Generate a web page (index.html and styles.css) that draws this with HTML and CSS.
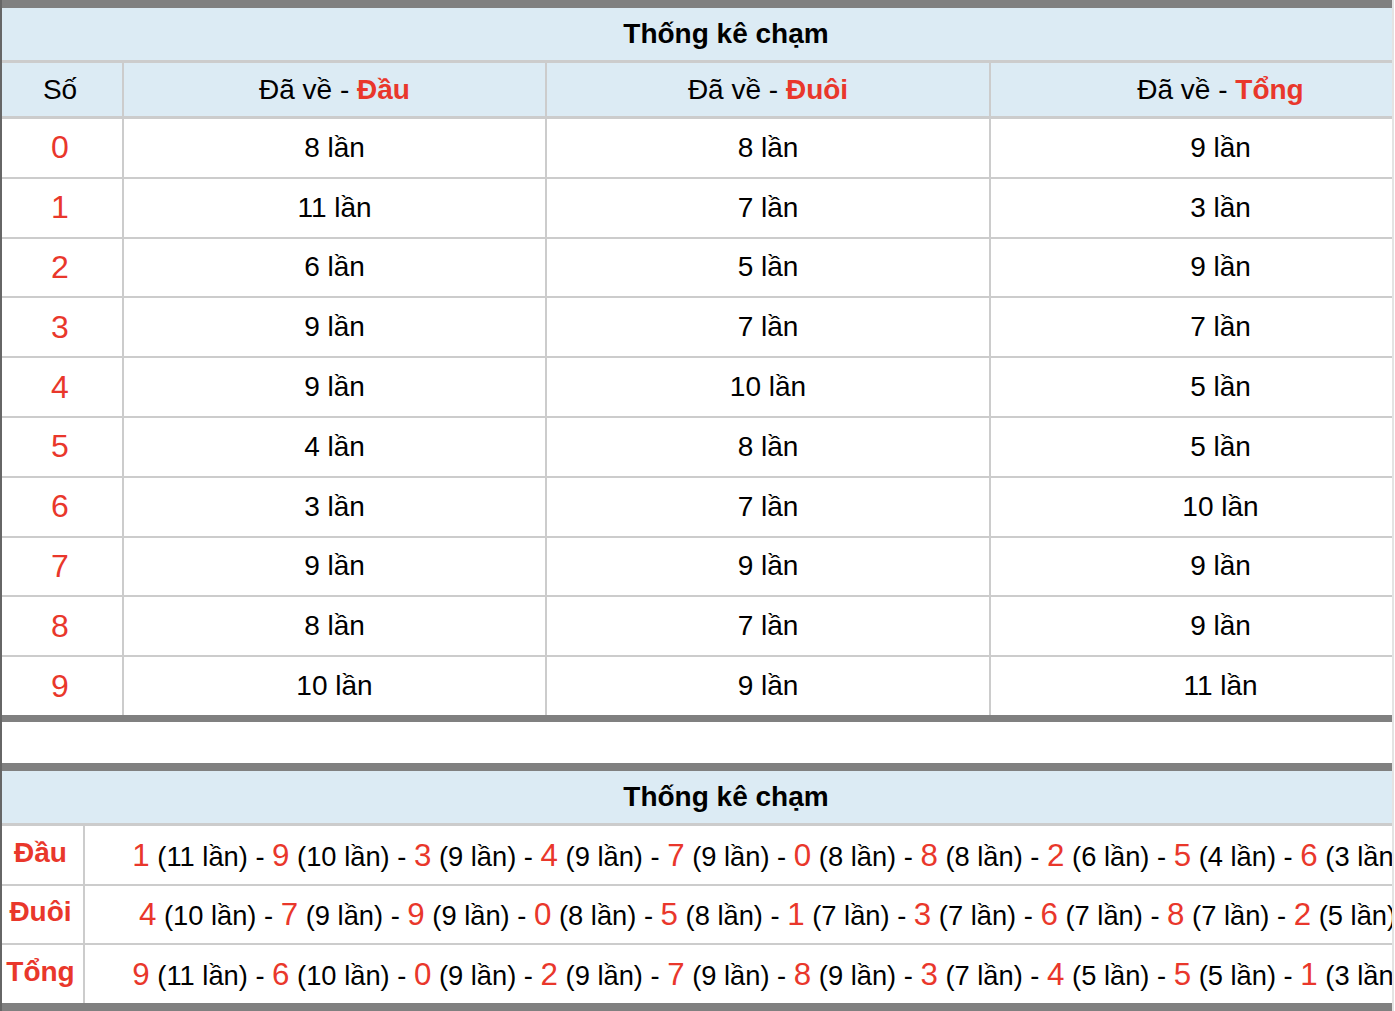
FILE: index.html
```html
<!DOCTYPE html>
<html lang="vi">
<head>
<meta charset="utf-8">
<title>Thống kê chạm</title>
<link rel="stylesheet" href="styles.css">
</head>
<body>
<div class="page">
  <section class="stat">
    <div class="title">Thống kê chạm</div>
    <div class="grid head">
      <div class="cell first"><span>Số</span></div>
      <div class="cell"><span>Đã về - <b class="red">Đầu</b></span></div>
      <div class="cell"><span>Đã về - <b class="red">Đuôi</b></span></div>
      <div class="cell"><span>Đã về - <b class="red">Tổng</b></span></div>
    </div>
    <div class="grid body">
      <div class="cell first n">0</div><div class="cell">8 lần</div><div class="cell">8 lần</div><div class="cell">9 lần</div>
      <div class="cell first n">1</div><div class="cell">11 lần</div><div class="cell">7 lần</div><div class="cell">3 lần</div>
      <div class="cell first n">2</div><div class="cell">6 lần</div><div class="cell">5 lần</div><div class="cell">9 lần</div>
      <div class="cell first n">3</div><div class="cell">9 lần</div><div class="cell">7 lần</div><div class="cell">7 lần</div>
      <div class="cell first n">4</div><div class="cell">9 lần</div><div class="cell">10 lần</div><div class="cell">5 lần</div>
      <div class="cell first n">5</div><div class="cell">4 lần</div><div class="cell">8 lần</div><div class="cell">5 lần</div>
      <div class="cell first n">6</div><div class="cell">3 lần</div><div class="cell">7 lần</div><div class="cell">10 lần</div>
      <div class="cell first n">7</div><div class="cell">9 lần</div><div class="cell">9 lần</div><div class="cell">9 lần</div>
      <div class="cell first n">8</div><div class="cell">8 lần</div><div class="cell">7 lần</div><div class="cell">9 lần</div>
      <div class="cell first n">9</div><div class="cell">10 lần</div><div class="cell">9 lần</div><div class="cell">11 lần</div>
    </div>
  </section>

  <div class="spacer"></div>

  <section class="stat stat-sum">
    <div class="title">Thống kê chạm</div>
    <div class="grid sum">
      <div class="cell first label">Đầu</div>
      <div class="cell line"><span><span class="d">1</span> (11 lần) - <span class="d">9</span> (10 lần) - <span class="d">3</span> (9 lần) - <span class="d">4</span> (9 lần) - <span class="d">7</span> (9 lần) - <span class="d">0</span> (8 lần) - <span class="d">8</span> (8 lần) - <span class="d">2</span> (6 lần) - <span class="d">5</span> (4 lần) - <span class="d">6</span> (3 lần)</span></div>
      <div class="cell first label">Đuôi</div>
      <div class="cell line"><span><span class="d">4</span> (10 lần) - <span class="d">7</span> (9 lần) - <span class="d">9</span> (9 lần) - <span class="d">0</span> (8 lần) - <span class="d">5</span> (8 lần) - <span class="d">1</span> (7 lần) - <span class="d">3</span> (7 lần) - <span class="d">6</span> (7 lần) - <span class="d">8</span> (7 lần) - <span class="d">2</span> (5 lần)</span></div>
      <div class="cell first label">Tổng</div>
      <div class="cell line"><span><span class="d">9</span> (11 lần) - <span class="d">6</span> (10 lần) - <span class="d">0</span> (9 lần) - <span class="d">2</span> (9 lần) - <span class="d">7</span> (9 lần) - <span class="d">8</span> (9 lần) - <span class="d">3</span> (7 lần) - <span class="d">4</span> (5 lần) - <span class="d">5</span> (5 lần) - <span class="d">1</span> (3 lần)</span></div>
    </div>
  </section>
</div>
</body>
</html>
```

FILE: styles.css
```css
* {
  box-sizing: border-box;
}

body {
  margin: 0;
  background: #ffffff;
  color: #000000;
  font-family: "Liberation Sans", Arial, Helvetica, sans-serif;
  font-size: 28px;
}

.page {
  width: 1394px;
  height: 1011px;
  border-left: 2px solid #666666;
  border-right: 2px solid #e3e3e3;
  overflow: hidden;
}

.stat {
  width: 1448px;
  border-top: 8px solid #808080;
  border-bottom: 7px solid #808080;
}

.stat-sum {
  border-bottom-width: 8px;
}

.title {
  height: 55px;
  background: #dcebf4;
  border-bottom: 3px solid #cccccc;
  display: flex;
  align-items: center;
  justify-content: center;
  font-size: 28px;
  font-weight: bold;
}

.grid {
  display: grid;
  grid-template-columns: 120px 421px 442px 459px;
  column-gap: 2px;
  background: #cccccc;
}

.cell {
  display: flex;
  align-items: center;
  justify-content: center;
  background: #ffffff;
  white-space: nowrap;
}

.first {
  padding-right: 4px;
}

.head {
  height: 56px;
  border-bottom: 3px solid #cccccc;
}

.head .cell {
  background: #dcebf4;
}

.body {
  grid-auto-rows: 57.8px;
  row-gap: 2px;
}

.red {
  color: #e9372b;
  font-weight: bold;
}

.n {
  color: #e9372b;
  font-size: 32px;
}

.spacer {
  height: 41px;
}

.sum {
  grid-template-columns: 81px 1365px;
  grid-auto-rows: 57.67px;
  row-gap: 2px;
}

.label {
  color: #e9372b;
  font-weight: bold;
  padding-bottom: 4px;
}

.line {
  padding-top: 2px;
  font-size: 27.3px;
}

.d {
  color: #e9372b;
  font-size: 31.3px;
}
```
